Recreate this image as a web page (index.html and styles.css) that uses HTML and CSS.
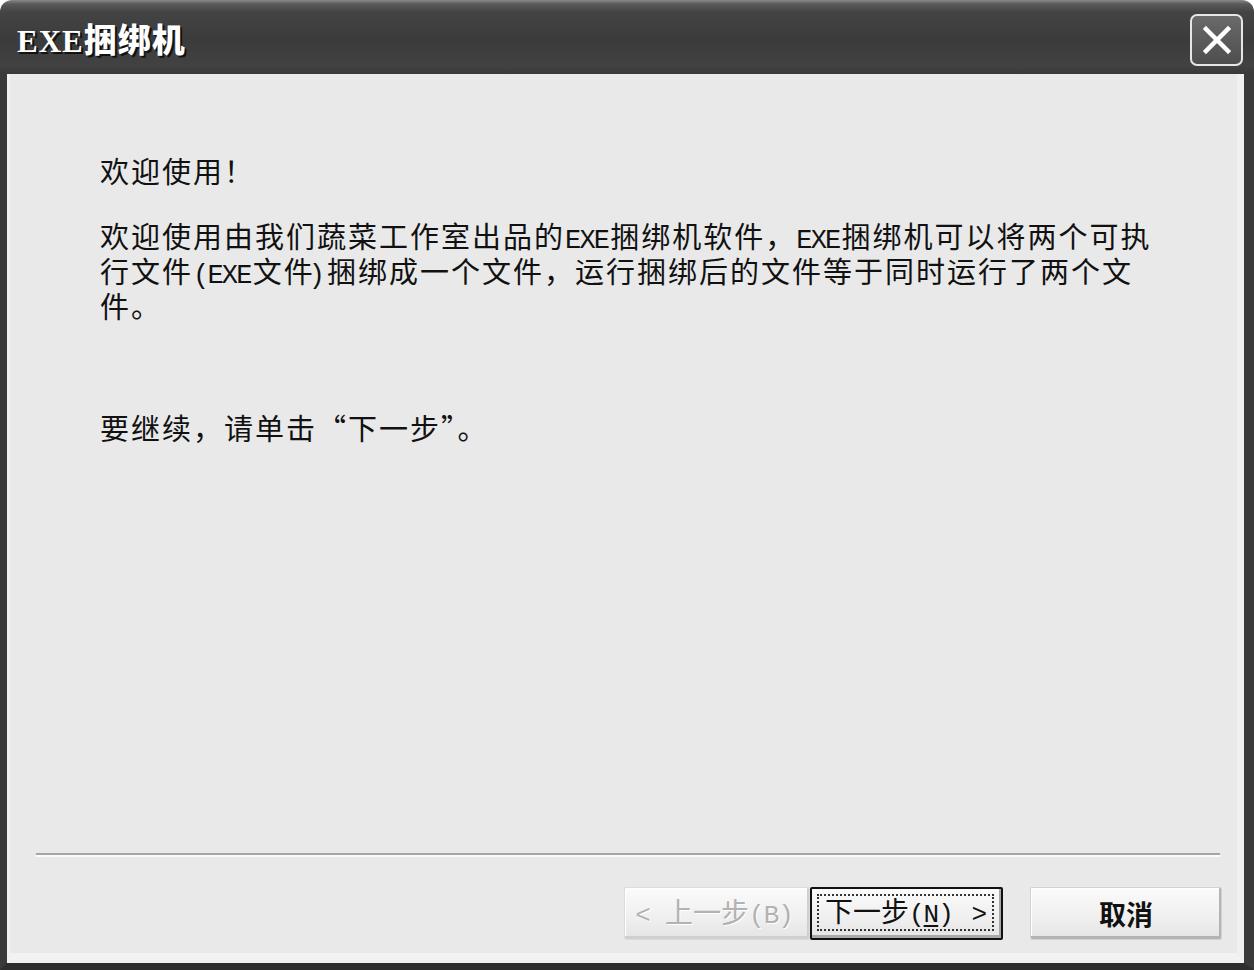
FILE: index.html
```html
<!DOCTYPE html>
<html lang="zh-CN">
<head>
<meta charset="utf-8">
<title>EXE捆绑机</title>
<link rel="stylesheet" href="styles.css">
</head>
<body>
<div class="window">
  <div class="titlebar">
    <div class="title"><span class="title-lat">EXE</span>捆绑机</div>
    <button class="close" aria-label="关闭">
      <svg width="30" height="30" viewBox="0 0 30 30"><path d="M4 4 L26 26 M26 4 L4 26" stroke="#ffffff" stroke-width="4.5" stroke-linecap="square" fill="none"/></svg>
    </button>
  </div>
  <div class="frame">
    <div class="client">
      <div class="content">
        <p class="line welcome">欢迎使用！</p>
        <p class="para">欢迎使用由我们蔬菜工作室出品的<span class="lat">EXE</span>捆绑机软件，<span class="lat">EXE</span>捆绑机可以将两个可执<br>行文件<span class="lat">(EXE</span>文件<span class="lat paren">)</span>捆绑成一个文件，运行捆绑后的文件等于同时运行了两个文<br>件。</p>
        <p class="line cont">要继续，请单击“下一步”。</p>
      </div>
      <div class="sep"></div>
      <div class="buttons">
        <button class="btn back" disabled><span class="label"><span class="lat">&lt;</span> 上一步<span class="lat">(B)</span></span></button>
        <button class="btn next"><span class="focus"><span class="label">下一步<span class="lat">(<u>N</u>) &gt;</span></span></span></button>
        <button class="btn cancel"><span class="label">取消</span></button>
      </div>
    </div>
  </div>
</div>
</body>
</html>
```

FILE: styles.css
```css
* { box-sizing: border-box; }
html, body { margin: 0; padding: 0; background: #ffffff; }
body {
  font-family: "Noto Sans CJK SC", "Liberation Sans", sans-serif;
  width: 1254px;
  height: 970px;
  overflow: hidden;
}
.window {
  width: 1254px;
  height: 970px;
  display: flex;
  flex-direction: column;
}
.titlebar {
  height: 74px;
  flex: none;
  display: flex;
  align-items: flex-start;
  justify-content: space-between;
  padding: 0 11px 0 17px;
  border-radius: 12px 12px 0 0;
  background: linear-gradient(#8a8a8a 0, #5a5a5a 4px, #444 12px, #3b3b3b 40px, #424242 66px, #383838 74px);
}
.title {
  margin-top: 19px;
  color: #ffffff;
  font-family: "Noto Sans CJK SC", sans-serif;
  font-weight: 900;
  font-size: 33px;
  line-height: 38px;
  text-shadow: 2px 2px 0 #111, 1px 1px 0 #222;
  letter-spacing: 1px;
}
.title-lat {
  font-family: "Liberation Serif", serif;
  font-weight: 700;
  font-size: 31px;
  letter-spacing: 1px;
}
.close {
  margin-top: 14px;
  width: 53px;
  height: 52px;
  padding: 0;
  border: 2px solid #e6e6e6;
  border-radius: 7px;
  background: linear-gradient(#6a6a6a, #4e4e4e);
  display: flex;
  align-items: center;
  justify-content: center;
}
.frame {
  flex: 1;
  display: flex;
  border-left: 7px solid #3a3a3a;
  border-right: 10px solid #3a3a3a;
  border-bottom: 7px solid #2e2e2e;
  background: #e9e9e9;
}
.client {
  flex: 1;
  display: flex;
  flex-direction: column;
  background: #e9e9e9;
  border-left: 3px solid #f2f2f2;
  border-right: 7px solid #f0f0f0;
  border-bottom: 10px solid #f2f2f2;
}
.content {
  flex: 1;
  padding: 82px 0 0 90px;
  color: #111;
  font-size: 29px;
  letter-spacing: 2px;
  line-height: 29px;
}
.content p { margin: 0; }
.para { margin-top: 36px !important; }
.cont { margin-top: 93px !important; }
.lat {
  font-family: "Liberation Mono", monospace;
  font-size: 27px;
  letter-spacing: -1.8px;
}
.content .lat { margin-right: 2px; }
.content .paren { margin-left: -6px; margin-right: 4px; }
.sep {
  height: 4px;
  margin: 0 17px 0 26px;
  border-top: 2px solid #a4a4a4;
  border-bottom: 2px solid #fbfbfb;
}
.buttons {
  display: flex;
  justify-content: flex-end;
  margin: 30px 15px 13px 0;
  height: 53px;
}
.btn {
  height: 53px;
  padding: 0;
  font-family: "Noto Sans CJK SC", sans-serif;
  font-size: 28px;
  color: #111;
  background: linear-gradient(#fbfbfb, #efefef 60%, #e4e4e4);
  border: 1px solid #d2d2d2;
  border-radius: 2px;
  box-shadow: inset -2px -3px 0 #b4b4b4, inset 1px 1px 0 #ffffff;
  display: flex;
  align-items: center;
  justify-content: center;
}
.label {
  white-space: pre;
  line-height: 32px;
}
.btn .lat {
  font-size: 26px;
  letter-spacing: -1px;
}
.back {
  width: 186px;
  color: #b2b2b2;
  text-shadow: 1px 1px 0 #ffffff;
  border-color: #dcdcdc;
  box-shadow: inset -2px -3px 0 #cfcfcf, inset 1px 1px 0 #ffffff;
}
.back .label { word-spacing: 9px; margin-left: -6px; }
.next {
  width: 193px;
  border: 2px solid #111;
  box-shadow: inset -2px -3px 0 #a8a8a8;
  padding: 5px 7px 7px 5px;
}
.focus {
  flex: 1;
  align-self: stretch;
  display: flex;
  align-items: center;
  justify-content: center;
  border: 2px dotted #333;
}
.next .lat { word-spacing: 4px; }
.focus u { text-decoration-thickness: 2px; text-underline-offset: 3px; }
.cancel {
  width: 192px;
  margin-left: 27px;
  font-weight: 700;
  font-size: 27px;
}
```
